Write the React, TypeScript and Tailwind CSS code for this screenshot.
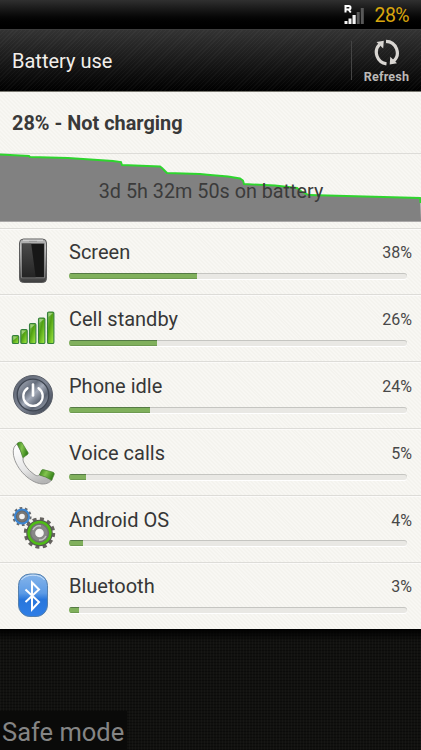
import type { ReactNode } from "react";

type Usage = {
    name: string;
    percent: number;
    icon: ReactNode;
};

function ScreenIcon() {
    return (
        <svg width="44" height="46" viewBox="0 0 44 46">
            <defs>
                <linearGradient id="case" x1="0" y1="0" x2="0" y2="1">
                    <stop offset="0" stopColor="#a8a8a8" />
                    <stop offset=".2" stopColor="#c4c4c4" />
                    <stop offset=".6" stopColor="#828282" />
                    <stop offset="1" stopColor="#3c3c3c" />
                </linearGradient>
                <linearGradient id="glare" x1="0" y1="0" x2="0" y2="1">
                    <stop offset="0" stopColor="#4a4a4a" />
                    <stop offset="1" stopColor="#242424" />
                </linearGradient>
            </defs>
            <rect x="8.5" y="1" width="27" height="43.5" rx="4" fill="url(#case)" stroke="#5c5c5c" />
            <path d="M12 2.2h20" stroke="#dedede" />
            <rect x="10.7" y="5.2" width="22.6" height="34.6" fill="#171717" stroke="#999" strokeWidth=".7" />
            <path d="M11.2 5.7h9l4.5 33.6H11.2z" fill="url(#glare)" />
            <path d="M18 3.4h8" stroke="#999" />
        </svg>
    );
}

function CellIcon() {
    const bars = [
        { x: 1.3, y: 29, h: 8 },
        { x: 9.8, y: 23, h: 14 },
        { x: 18.5, y: 17, h: 20 },
        { x: 27.5, y: 11.5, h: 25.5 },
        { x: 36.5, y: 5.5, h: 31.5 },
    ];
    return (
        <svg width="46" height="46" viewBox="-1 -1.5 46 46">
            <defs>
                <linearGradient id="bar" x1="0" y1="0" x2="1" y2="1">
                    <stop offset="0" stopColor="#85bd62" />
                    <stop offset=".4" stopColor="#50a011" />
                    <stop offset="1" stopColor="#a6ef48" />
                </linearGradient>
            </defs>
            {bars.map((b) => (
                <g key={b.x}>
                    <rect x={b.x} y={b.y} width="6.4" height={b.h} rx="1.3" fill="url(#bar)" stroke="#347f3c" strokeWidth="1.1" />
                    <path d={`M${b.x + 1} ${b.y + 5}v-4h4.5z`} fill="#c3e4ad" opacity=".6" />
                </g>
            ))}
        </svg>
    );
}

function PowerIcon() {
    return (
        <svg width="44" height="46" viewBox="0 0 44 46">
            <defs>
                <linearGradient id="rim" x1="0" y1="0" x2="1" y2="1">
                    <stop offset="0" stopColor="#555c69" />
                    <stop offset=".5" stopColor="#7f8695" />
                    <stop offset="1" stopColor="#343b47" />
                </linearGradient>
                <linearGradient id="steel" x1="0" y1="0" x2="1" y2="1">
                    <stop offset="0" stopColor="#b0b6c2" />
                    <stop offset=".35" stopColor="#666e7c" />
                    <stop offset=".5" stopColor="#a4abb9" />
                    <stop offset=".7" stopColor="#5d6573" />
                    <stop offset="1" stopColor="#b0b7c5" />
                </linearGradient>
            </defs>
            <circle cx="22" cy="23" r="19.5" fill="url(#rim)" stroke="#5a5f69" />
            <circle cx="22" cy="23" r="15.8" fill="url(#steel)" stroke="#3f4652" strokeWidth="1.3" />
            <path d="M16.5 16.2a9.7 9.7 0 1 0 11 0" fill="none" stroke="#fff" strokeWidth="2.3" strokeLinecap="round" />
            <path d="M22 12.5v11" stroke="#fff" strokeWidth="2.6" strokeLinecap="round" />
        </svg>
    );
}

function CallIcon() {
    return (
        <svg width="44" height="46" viewBox="0 0 44 46">
            <defs>
                <linearGradient id="handset" x1=".2" y1="0" x2=".6" y2="1">
                    <stop offset="0" stopColor="#fff" />
                    <stop offset=".6" stopColor="#e6e6e6" />
                    <stop offset="1" stopColor="#b5b5b5" />
                </linearGradient>
                <linearGradient id="cap" x1="0" y1="0" x2="1" y2=".4">
                    <stop offset="0" stopColor="#2f7d12" />
                    <stop offset=".5" stopColor="#83c44e" />
                    <stop offset="1" stopColor="#37831a" />
                </linearGradient>
            </defs>
            <path
                d="M6 5C3 7 2 10 2.3 14 3 27 17 43.500 31 45c5 .2 9-2 10-5l-12.500-4.500c-1.500 2-3.500 1.500-6.500-1C17 31 14 26.500 12.500 23c-1-3-.5-4 .5-4.500z"
                fill="url(#handset)"
                stroke="#8e8e8e"
                strokeWidth=".9"
            />
            <path d="M6 4.500q2.500-2 4.700-1.200l6.300 10.200q.5 1-.5 2l-4.700 3.200Q10 11 6 4.500z" fill="url(#cap)" stroke="#4b8033" strokeWidth=".7" />
            <path d="M28.300 36l2.200-4.700q.6-1 1.800-.7l10 2.700q1.200.6.900 2l-2.500 6Q35 37.500 28.300 36z" fill="url(#cap)" stroke="#4b8033" strokeWidth=".7" />
        </svg>
    );
}

function GearsIcon() {
    return (
        <svg width="46" height="46" viewBox="-1 -1 46 46">
            <g fill="none">
                <circle cx="11" cy="10.5" r="8.5" stroke="#66696e" strokeWidth="2.2" strokeDasharray="2.7 2.64" />
                <circle cx="11" cy="10.5" r="7" fill="#666" stroke="#3b86d2" strokeWidth="2" />
                <circle cx="11" cy="10.5" r="4" fill="#f2f2f2" stroke="#777" strokeWidth="2.4" />
                <circle cx="28.5" cy="27" r="14.2" stroke="#66635f" strokeWidth="3" strokeDasharray="4 3.435" />
                <circle cx="28.5" cy="27" r="12" fill="#707070" stroke="#555" strokeWidth="2.5" />
                <circle cx="28.5" cy="27" r="10.9" stroke="#4fbb17" strokeWidth="2.5" />
                <circle cx="28.5" cy="27" r="6.3" fill="#f5f5f3" stroke="#868686" strokeWidth="4" />
                <path d="M22 24a7 7 0 0 1 8-4M35 30a7 7 0 0 1-7 4" stroke="#c2c2c2" strokeWidth="1.5" />
            </g>
        </svg>
    );
}

function BluetoothIcon() {
    return (
        <svg width="44" height="46" viewBox="0 0 44 46">
            <defs>
                <linearGradient id="blue" x1="0" y1="0" x2="0" y2="1">
                    <stop offset="0" stopColor="#86b5ea" />
                    <stop offset=".45" stopColor="#5c9be6" />
                    <stop offset=".6" stopColor="#2876dc" />
                    <stop offset="1" stopColor="#2f7ee6" />
                </linearGradient>
            </defs>
            <rect x="7.5" y="2" width="29" height="42.5" rx="11.5" fill="url(#blue)" stroke="#5580ad" />
            <path d="M10.5 8c4-6.500 19-6.500 23 0" stroke="#d2e6fb" fill="none" />
            <path d="M14.5 17.500l13.500 12.500-7 7.500v-27l7 7-13.500 12.500" fill="none" stroke="#fff" strokeWidth="2" />
        </svg>
    );
}

function RefreshIcon() {
    return (
        <svg width="28" height="28" viewBox="0 0 28 28">
            <g fill="none" stroke="#d9d6d2" strokeWidth="3.2">
                <path d="M13.5 25.8A11.500 11.500 0 0 1 6.500 6.500" />
                <path d="M13 3.300a11.500 11.500 0 0 1 7.500 20" />
            </g>
            <path d="M3.500 4L10.800 2.700 10.200 10.500zM24 25.300L16.700 26.600 17.300 18.800z" fill="#d9d6d2" />
        </svg>
    );
}

const usages: Usage[] = [
    { name: "Screen", percent: 38, icon: <ScreenIcon /> },
    { name: "Cell standby", percent: 26, icon: <CellIcon /> },
    { name: "Phone idle", percent: 24, icon: <PowerIcon /> },
    { name: "Voice calls", percent: 5, icon: <CallIcon /> },
    { name: "Android OS", percent: 4, icon: <GearsIcon /> },
    { name: "Bluetooth", percent: 3, icon: <BluetoothIcon /> },
];

function StatusBar() {
    return (
        <div className="flex h-[29px] items-center justify-end bg-linear-to-b from-[#303030] to-black pr-[12px]">
            <svg width="21" height="21" viewBox="0 0 21 21" className="mr-[10px]">
                <path d="M1.5 8.500V2h3.300q1.700 0 1.700 1.700T4.800 5.500H2m2.500 0l2.300 3" stroke="#fff" strokeWidth="2" fill="none" />
                <path d="M.5 17h3v3h-3zM4.500 14.500h3V20h-3zM8.500 11h3.200v9H8.500z" fill="#f2f2f2" />
                <path d="M12.700 8h3v12h-3zM16.800 4h3v16h-3z" fill="#585858" />
            </svg>
            <span className="pt-px text-[19.5px] leading-[29px] tracking-[-0.6px] text-[#d9a60d]">28%</span>
        </div>
    );
}

function Header() {
    return (
        <header className="flex h-[63px] items-center border-t border-b border-t-[#3c3c3c] border-b-[#77766f] bg-[repeating-linear-gradient(135deg,#ffffff08_0px,#ffffff08_1px,transparent_1px,transparent_3px),linear-gradient(#333,#000)] pl-3">
            <h1 className="flex-1 pt-px text-[20px] text-[#f2efeb]">Battery use</h1>
            <div className="h-[39px] w-px bg-[#444]" />
            <button className="flex w-[69px] flex-col items-center pt-px text-[12.6px] leading-[16px] font-bold tracking-[0.2px] text-[#bbb9b7]">
                <RefreshIcon />
                <span className="mt-[3px]">Refresh</span>
            </button>
        </header>
    );
}

function BatteryGraph() {
    const line = "0,0.5 29,2 30,3 68,4 113,7 121,8 122,11 160,12.5 162,14 167,19 200,20 210,21 228,22.5 240,24.5 243,26.5 244,30 275,31.5 297,34 302,38 309,41 420,44 420.5,49";
    return (
        <div className="relative h-[68px] border-b border-[#aaa8a8]">
            <svg width="421" height="67" className="block overflow-visible">
                <polygon points={`${line} 421,67 0,67`} fill="#818181" />
                <polyline points={line} fill="none" stroke="#2ed52e" strokeWidth="1.9" />
            </svg>
            <p className="absolute inset-0 pl-px text-center text-[19.8px] leading-[75px] whitespace-nowrap text-[#3b3b3b]">
                3d 5h 32m 50s on battery
            </p>
        </div>
    );
}

function UsageRow({ name, percent, icon }: Usage) {
    return (
        <li className="flex h-[66.8px] border-t border-[#dddcd8] pr-[9px] shadow-[inset_0_1px_0_#fcfbf9]">
            <div className="flex w-[69px] shrink-0 justify-center pt-[9.7px] pr-[3px]">{icon}</div>
            <div className="flex-1">
                <div className="flex h-[44.7px] items-center justify-between">
                    <span className="pt-[3px] text-[20px] text-[#373737]">{name}</span>
                    <span className="pt-[5px] text-[16px] text-[#484848]">{percent}%</span>
                </div>
                <div className="mr-[5px] h-[6px] overflow-hidden rounded-full bg-[#e9e8e4] shadow-[inset_0_1px_0_#c5c5c1,0_1px_0_#fff]">
                    <div
                        className="h-full bg-[#80b05c] shadow-[inset_0_1px_0_#557a45,inset_0_-1px_0_#6e9a50]"
                        style={{ width: `${percent}%` }}
                    />
                </div>
            </div>
        </li>
    );
}

export default function App() {
    return (
        <div className="flex h-[750px] w-[421px] flex-col overflow-hidden bg-[#11110f] font-[Roboto,sans-serif]">
            <StatusBar />
            <Header />
            <main className="h-[537px] shrink-0 bg-[#f6f5f1] bg-[repeating-linear-gradient(45deg,#f8f7f3_0px,#f8f7f3_1.4px,#f4f3ee_1.4px,#f4f3ee_2.8px)]">
                <h2 className="h-[62px] border-b border-[#dddcd8] pl-3 text-[19.9px] leading-[63px] font-bold text-[#393939]">
                    28% - Not charging
                </h2>
                <BatteryGraph />
                <ul className="pt-[5.6px]">
                    {usages.map((usage) => (
                        <UsageRow key={usage.name} {...usage} />
                    ))}
                </ul>
            </main>
            <footer className="flex flex-1 items-end bg-[linear-gradient(#000,transparent_12px),repeating-linear-gradient(90deg,#ffffff06_0px,#ffffff06_1px,transparent_1px,transparent_3px),repeating-linear-gradient(0deg,#00000055_0px,#00000055_1px,transparent_1px,transparent_3px)]">
                <div className="h-[39px] w-[127px] bg-[#0a0a09] pl-[2px] text-[25.5px] leading-[42px] whitespace-nowrap text-[#858585]">
                    Safe mode
                </div>
            </footer>
        </div>
    );
}
